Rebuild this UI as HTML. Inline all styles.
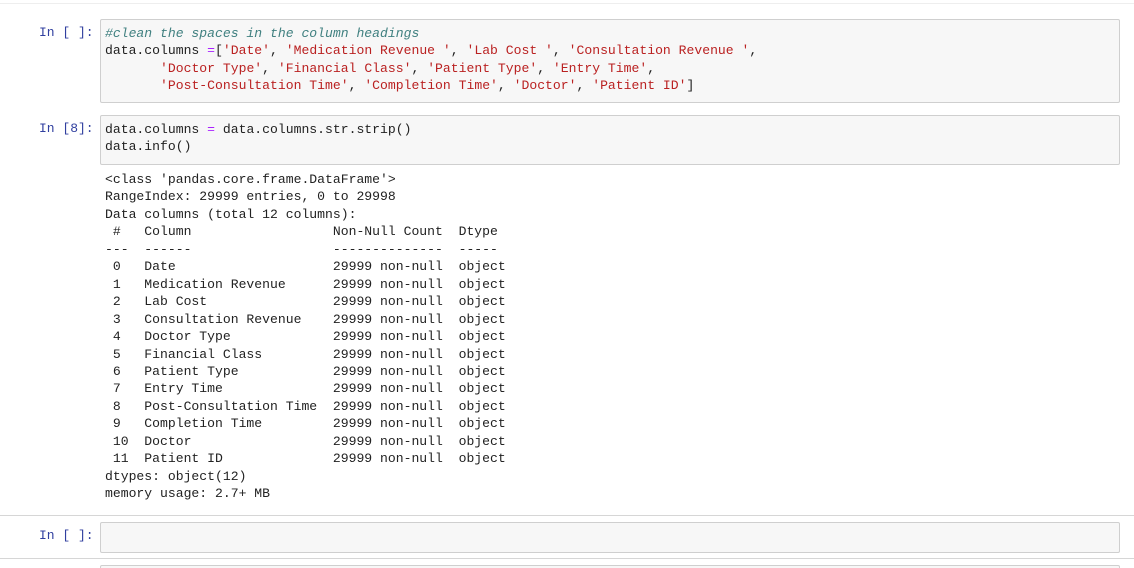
<!DOCTYPE html>
<html><head><meta charset="utf-8"><style>
html,body{margin:0;padding:0;background:#fff;width:1134px;height:568px;overflow:hidden;position:relative}
.m{font-family:"Liberation Mono",monospace;font-size:13.1px;line-height:17.45px;white-space:pre;color:#222}
.p{position:absolute;color:#303f9f;font-family:"Liberation Mono",monospace;font-size:13px}
.box{position:absolute;left:100px;width:1018px;background:#f7f7f7;border:1px solid #cfcfcf;border-radius:2px}
.c{color:#408080;font-style:italic}.s{color:#ba2121}.o{color:#aa22ff}
.hl{position:absolute;left:0;width:1134px;height:1px;background:#d6d6d6}
</style></head><body>
<div class="hl" style="top:3px;background:#eee"></div>
<div class="p" style="left:39px;top:25px">In [ ]:</div>
<div class="box" style="top:19px;height:82px"></div>
<div class="m" style="position:absolute;left:105px;top:25px"><span class="c">#clean the spaces in the column headings</span>
data.columns <span class="o">=</span>[<span class="s">'Date'</span>, <span class="s">'Medication Revenue '</span>, <span class="s">'Lab Cost '</span>, <span class="s">'Consultation Revenue '</span>,
       <span class="s">'Doctor Type'</span>, <span class="s">'Financial Class'</span>, <span class="s">'Patient Type'</span>, <span class="s">'Entry Time'</span>,
       <span class="s">'Post-Consultation Time'</span>, <span class="s">'Completion Time'</span>, <span class="s">'Doctor'</span>, <span class="s">'Patient ID'</span>]</div>
<div class="p" style="left:39px;top:121px">In [8]:</div>
<div class="box" style="top:115px;height:48px"></div>
<div class="m" style="position:absolute;left:105px;top:121px">data.columns <span class="o">=</span> data.columns.str.strip()
data.info()</div>
<div class="m" style="position:absolute;left:105px;top:171px">&lt;class 'pandas.core.frame.DataFrame'&gt;
RangeIndex: 29999 entries, 0 to 29998
Data columns (total 12 columns):
 #   Column                  Non-Null Count  Dtype 
---  ------                  --------------  ----- 
 0   Date                    29999 non-null  object
 1   Medication Revenue      29999 non-null  object
 2   Lab Cost                29999 non-null  object
 3   Consultation Revenue    29999 non-null  object
 4   Doctor Type             29999 non-null  object
 5   Financial Class         29999 non-null  object
 6   Patient Type            29999 non-null  object
 7   Entry Time              29999 non-null  object
 8   Post-Consultation Time  29999 non-null  object
 9   Completion Time         29999 non-null  object
 10  Doctor                  29999 non-null  object
 11  Patient ID              29999 non-null  object
dtypes: object(12)
memory usage: 2.7+ MB</div>
<div class="hl" style="top:515px"></div>
<div class="p" style="left:39px;top:528px">In [ ]:</div>
<div class="box" style="top:522px;height:29px"></div>
<div class="hl" style="top:558px"></div>
<div class="box" style="top:565px;height:10px"></div>
</body></html>
